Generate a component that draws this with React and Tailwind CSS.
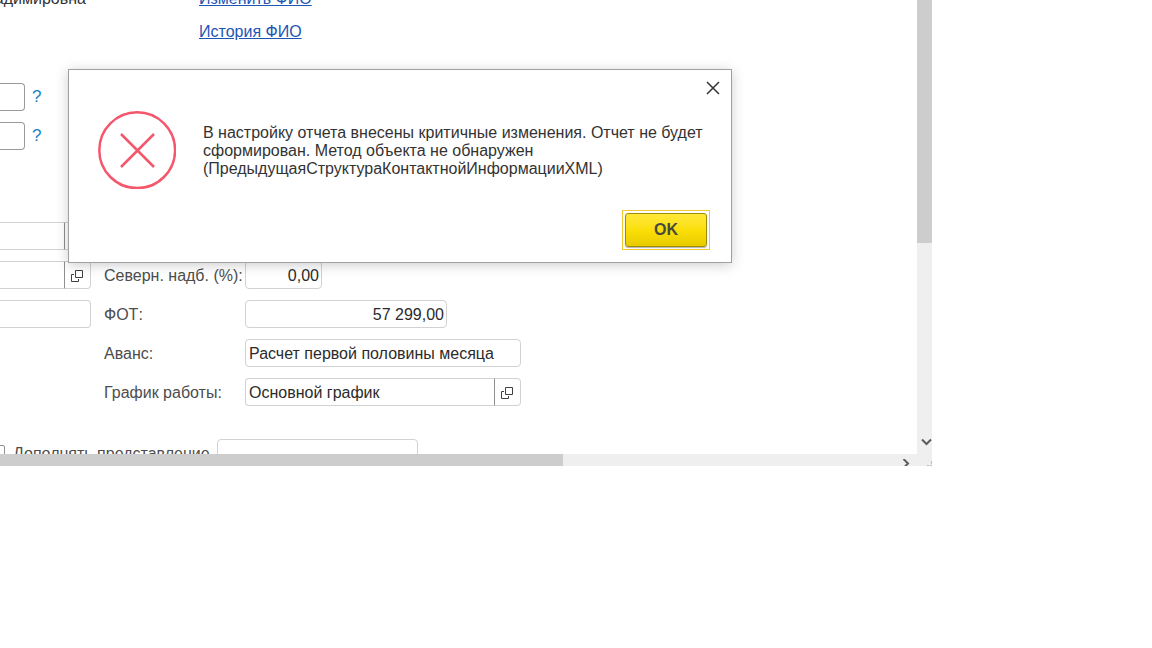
import { useState } from "react";

const fieldClass = "h-7 border border-[#d2d2d2] bg-white pt-[2px] pr-[2px] pl-[3px] text-[#2b2b2b] outline-none";

function OpenIcon() {
  return (
    <svg width="12" height="12" viewBox="0 0 12 12" fill="none" stroke="#3f3f3f">
      <path d="M4.5 0.5h7v7h-7z" />
      <path d="M3 4.5H0.5v7h7V9" />
    </svg>
  );
}

function OpenButton({ label }) {
  return (
    <button
      type="button"
      aria-label={label}
      className="flex h-7 w-[27px] shrink-0 items-center justify-center rounded-r border border-[#d2d2d2] border-l-[#8f8f8f] bg-white pt-[2px] pr-px"
    >
      <OpenIcon />
    </button>
  );
}

function HelpField({ label }) {
  return (
    <div className="flex items-center gap-[7px]">
      <input aria-label={label} className="h-7 w-[25px] rounded-r border border-l-0 border-[#9a9a9a] bg-white outline-none" />
      <button type="button" aria-label={`${label}: справка`} className="text-[17px] text-[#1a7fc4]">?</button>
    </div>
  );
}

// One line of the form: tail of the left column, then a labelled field
function Row({ left, id, label, children }) {
  return (
    <div className="flex h-7 items-center gap-[13px]">
      <div className="flex w-[91px] shrink-0">{left}</div>
      {label && (
        <>
          <label htmlFor={id} className="w-32 shrink-0 whitespace-nowrap pt-[2px] text-[#4d4d4d]">{label}</label>
          <div className="flex">{children}</div>
        </>
      )}
    </div>
  );
}

function LeftPicker({ label }) {
  return (
    <>
      <input aria-label={label} className="h-7 min-w-0 flex-1 border-y border-[#d2d2d2] bg-white outline-none" />
      <OpenButton label={`Открыть: ${label}`} />
    </>
  );
}

function ErrorDialog({ onClose }) {
  return (
    <div
      role="alertdialog"
      aria-modal="true"
      aria-describedby="error-text"
      className="absolute top-[69px] left-[68px] w-[664px] border border-[#a0a0a0] bg-white px-[21px] pt-[10px] pb-3 shadow-[0_2px_12px_rgba(0,0,0,0.2)]"
    >
      <div className="-mr-[11px] flex justify-end">
        <button type="button" aria-label="Закрыть" onClick={onClose} className="flex h-4 w-4 items-center justify-center">
          <svg width="14" height="14" viewBox="0 0 14 14" fill="none" stroke="#333" strokeWidth="1.5">
            <path d="M1 1l12 12M13 1L1 13" />
          </svg>
        </button>
      </div>
      <div className="mt-[15px] ml-2 flex items-start gap-[27px]">
        <svg width="78" height="78" viewBox="0 0 78 78" fill="none" stroke="#f4566c" strokeWidth="2.5" className="shrink-0">
          <circle cx="39.2" cy="39.2" r="37.9" />
          <path d="M23 23l33 33M56 23L23 56" />
        </svg>
        <p id="error-text" className="mt-[13px] text-[#333]">
          В настройку отчета внесены критичные изменения. Отчет не будет сформирован. Метод объекта не обнаружен
          (ПредыдущаяСтруктураКонтактнойИнформацииXML)
        </p>
      </div>
      <div className="mt-[21px] flex justify-end">
        <div className="border border-[#f2c92e] p-[2px]">
          <button
            type="button"
            onClick={onClose}
            className="block h-[34px] w-[82px] rounded-[3px] border border-[#a08c00] bg-linear-to-b from-[#ffe838] via-[#fbdf06] to-[#e8cb00] font-bold text-[#4a4a3c] shadow-[0_1px_1px_rgba(0,0,0,0.3)]"
          >
            OK
          </button>
        </div>
      </div>
    </div>
  );
}

export default function App() {
  const [open, setOpen] = useState(true);

  return (
    <div className="min-h-screen bg-white">
      <div className="relative w-full max-w-[932px] overflow-hidden font-['Liberation_Sans',Arial,sans-serif] text-[16px] leading-[18px]">
        <div className="flex">
          <main className="min-w-0 flex-1 overflow-hidden">
            <div className="-mt-[10px] flex">
              <div className="w-[199px] shrink-0 overflow-hidden">
                <div className="flex w-[86px] justify-end whitespace-nowrap text-[#333]">Владимировна</div>
              </div>
              <div className="flex flex-col items-start gap-[15px]">
                <a href="#change" className="text-[#1d55b3] underline">Изменить ФИО</a>
                <a href="#history" className="text-[#1d55b3] underline">История ФИО</a>
              </div>
            </div>

            <div className="mt-[42px] flex flex-col gap-[11px]">
              <HelpField label="ИНН" />
              <HelpField label="СНИЛС" />
            </div>

            <div className="mt-[72px] flex flex-col gap-[11px]">
              <Row left={<LeftPicker label="Подразделение" />} />
              <Row left={<LeftPicker label="Должность" />} id="north" label="Северн. надб. (%):">
                <input id="north" defaultValue="0,00" className={`${fieldClass} w-[77px] rounded text-right`} />
              </Row>
              <Row
                left={<input aria-label="Ставка" className="h-7 w-full rounded-r border border-l-0 border-[#d2d2d2] bg-white outline-none" />}
                id="fot"
                label="ФОТ:"
              >
                <input id="fot" defaultValue="57 299,00" className={`${fieldClass} w-[202px] rounded text-right`} />
              </Row>
              <Row id="advance" label="Аванс:">
                <input id="advance" defaultValue="Расчет первой половины месяца" className={`${fieldClass} w-[276px] rounded`} />
              </Row>
              <Row id="schedule" label="График работы:">
                <input id="schedule" defaultValue="Основной график" className={`${fieldClass} w-[249px] rounded-l border-r-0`} />
                <OpenButton label="Открыть график работы" />
              </Row>
            </div>

            {/* the last line is cut by the scroll area */}
            <div className="mt-[33px] flex h-[15px] items-start overflow-hidden">
              <label className="flex w-[217px] shrink-0 items-start whitespace-nowrap pt-[6px] text-[#4d4d4d]">
                <input type="checkbox" className="mr-2 -ml-[9px] h-[14px] w-[14px] shrink-0 appearance-none rounded-[2px] border border-[#8f8f8f] bg-white" />
                Дополнять представление
              </label>
              <input aria-label="Представление" className={`${fieldClass} w-[201px] rounded`} />
            </div>
          </main>

          <div className="flex w-[15px] shrink-0 flex-col justify-between bg-[#efefef]">
            <div className="h-[243px] bg-[#cdcdcd]" />
            <button type="button" aria-label="Вниз" className="flex h-6 items-center justify-center pl-1">
              <svg width="11" height="8" viewBox="0 0 11 8" fill="none" stroke="#5c5c5c" strokeWidth="2">
                <path d="M1 1.5l4.5 4.5L10 1.5" />
              </svg>
            </button>
          </div>
        </div>

        <div className="flex h-3 justify-between bg-[#efefef]">
          <div className="w-[563px] bg-[#cdcdcd]" />
          <div className="flex items-end gap-[17px]">
            <button type="button" aria-label="Вправо" className="h-[7px] w-2 overflow-hidden">
              <svg width="8" height="9" viewBox="0 0 8 9" fill="none" stroke="#5c5c5c" strokeWidth="2">
                <path d="M1.5 0L6 4.5L1.5 9" />
              </svg>
            </button>
            <svg width="5" height="5" viewBox="0 0 5 5" fill="#bdbdbd">
              <path d="M4 0h1v3H4zM0 4h2v1H0zM3 4h2v1H3z" />
            </svg>
          </div>
        </div>

        {open && <ErrorDialog onClose={() => setOpen(false)} />}
      </div>
    </div>
  );
}
